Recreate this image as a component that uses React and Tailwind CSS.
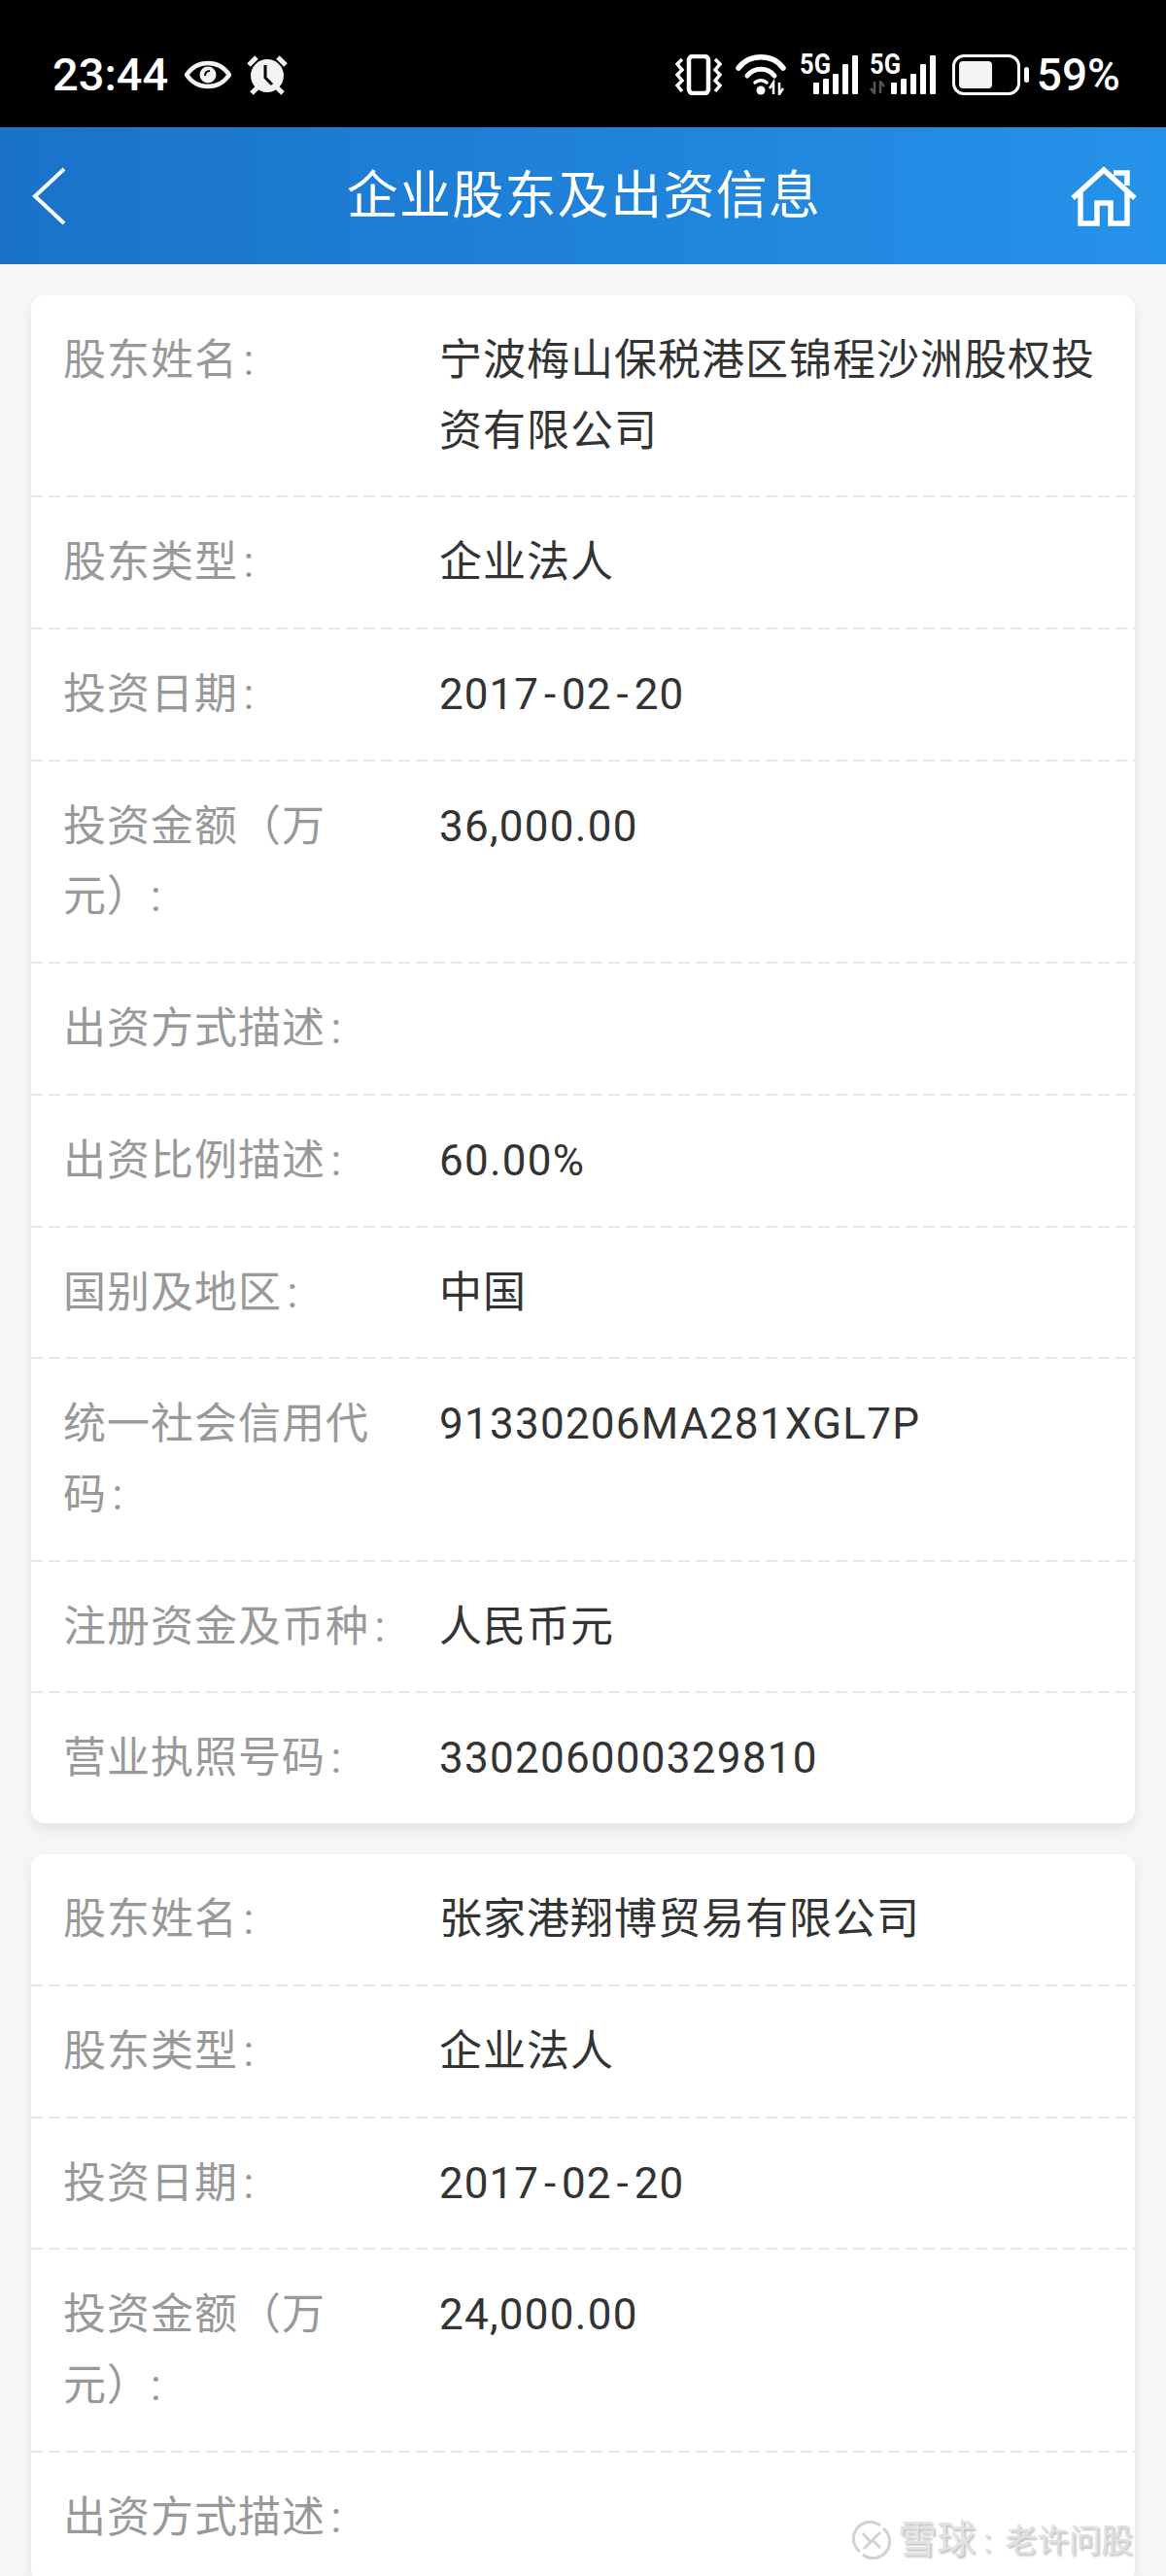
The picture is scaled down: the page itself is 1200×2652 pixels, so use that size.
import React from 'react';

const font = { fontFamily: '"Roboto", "Noto Sans CJK SC", sans-serif' };

const first = [
    ['股东姓名\u200A:', '宁波梅山保税港区锦程沙洲股权投资有限公司'],
    ['股东类型\u200A:', '企业法人'],
    ['投资日期\u200A:', '2017-02-20'],
    ['投资金额（万元）:', '36,000.00'],
    ['出资方式描述\u200A:', ''],
    ['出资比例描述\u200A:', '60.00%'],
    ['国别及地区\u200A:', '中国'],
    ['统一社会信用代码\u200A:', '91330206MA281XGL7P'],
    ['注册资金及币种\u200A:', '人民币元'],
    ['营业执照号码\u200A:', '330206000329810'],
];

const second = [
    ['股东姓名\u200A:', '张家港翔博贸易有限公司'],
    ['股东类型\u200A:', '企业法人'],
    ['投资日期\u200A:', '2017-02-20'],
    ['投资金额（万元）:', '24,000.00'],
    ['出资方式描述\u200A:', ''],
];

function Signal({ dim, className }) {
    return (
        <div className={`relative h-[40px] ${className}`}>
            <span className="absolute left-0 top-[-6px] origin-left scale-x-[0.85] text-[30px] font-bold leading-[30px]">5G</span>
            {dim && (
                <svg className="absolute left-0 bottom-0" width="16" height="14" viewBox="0 0 16 14" fill="none" stroke="#555" strokeWidth="2.5">
                    <path d="M5 1 V13 L1 8 M11 13 V1 L15 6" />
                </svg>
            )}
            <div className="absolute right-0 bottom-0 flex items-end gap-[4px]">
                <div className="h-[12px] w-[6px] rounded-[1px] bg-white" />
                <div className="h-[16px] w-[6px] rounded-[1px] bg-white" />
                <div className="h-[21px] w-[6px] rounded-[1px] bg-white" />
                <div className="h-[31px] w-[6px] rounded-[1px] bg-white" />
                <div className="h-[40px] w-[6px] rounded-[1px] bg-white" />
            </div>
        </div>
    );
}

function StatusIcons() {
    return (
        <div className="flex items-center text-white">
            <svg width="48" height="42" viewBox="0 0 48 42" fill="none" stroke="currentColor">
                <rect x="14" y="2" width="20" height="38" rx="4" strokeWidth="4.5" />
                <path d="M7 5 L2 10 L7 16 L2 21 L7 27 L2 32 L7 38" strokeWidth="3.5" />
                <path d="M41 5 L46 10 L41 16 L46 21 L41 27 L46 32 L41 38" strokeWidth="3.5" />
            </svg>
            <svg className="ml-[14px]" width="54" height="42" viewBox="0 0 54 42" fill="none" stroke="currentColor">
                <path d="M3 14 C14 -1 38 -1 49 14" strokeWidth="5.5" strokeLinecap="round" />
                <path d="M12 22 C19 13 33 13 40 22" strokeWidth="5" strokeLinecap="round" />
                <path d="M20 29 C23 26 29 26 32 29" strokeWidth="3.5" strokeLinecap="round" />
                <circle cx="26" cy="37" r="4.5" fill="currentColor" stroke="none" />
                <path d="M39 41 V29 L35 35 M45 29 V41 L49 35" strokeWidth="2.5" />
            </svg>
            <Signal className="ml-[12px] w-[60px]" />
            <Signal dim className="ml-[12px] w-[68px]" />
            <div className="ml-[17px] flex h-[42px] w-[70px] items-center rounded-[12px] border-[3px] border-white p-[4px]">
                <div className="h-full w-[34px] rounded-[4px] bg-[#f5f2f3]" />
            </div>
            <div className="ml-[4px] h-[16px] w-[5px] rounded-full bg-white" />
            <span className="ml-[8px] text-[46px] font-medium leading-none">59%</span>
        </div>
    );
}

function Header() {
    return (
        <div className="flex h-[141px] items-center bg-gradient-to-r from-[#1a72c9] to-[#2592ea] pl-[32px] pr-[30px] text-white">
            <div className="w-[68px]">
                <svg width="36" height="60" viewBox="0 0 36 60" fill="none" stroke="white" strokeWidth="4">
                    <path d="M34 2 L4 30 L34 58" />
                </svg>
            </div>
            <div className="flex-1 pt-[2px] text-center text-[53px] leading-none tracking-[1.3px]">企业股东及出资信息</div>
            <div className="flex w-[68px] justify-end">
                <svg width="68" height="62" viewBox="0 0 68 62" fill="none" stroke="white" strokeWidth="5.5">
                    <path d="M2 33 L34 4 L66 33" />
                    <path d="M10 27 V59 H27 V38 H41 V59 H58 V27" />
                    <path d="M44 7 H58 V20" />
                </svg>
            </div>
        </div>
    );
}

function Value({ text }) {
    if (/^\d{4}-\d{2}-\d{2}$/.test(text)) {
        const parts = text.split('-');
        return (
            <>
                {parts[0]}<span className="mx-[5px]">-</span>{parts[1]}<span className="mx-[5px]">-</span>{parts[2]}
            </>
        );
    }
    if (/^[\d,.%A-Z]+$/.test(text)) {
        return <span className="tracking-[1.25px]">{text}</span>;
    }
    return text;
}

function Row({ label, value, index }) {
    return (
        <>
            {index > 0 && (
                <div className="h-[2px] bg-[repeating-linear-gradient(90deg,#e6e6e6_0_12px,transparent_12px_18px)]" />
            )}
            <div className="flex pt-[31px] pb-[30.25px] pl-[33px] pr-[30px]">
                <div className="w-[334px] shrink-0 text-[#999999]">{label}</div>
                <div className="ml-[53px] min-h-[72.5px] flex-1 text-[#333333]">
                    <Value text={value} />
                </div>
            </div>
        </>
    );
}

function Card({ rows }) {
    return (
        <div className="rounded-[14px] bg-white text-[44px] leading-[72.5px] tracking-[1px] shadow-[0_6px_12px_rgba(0,0,0,0.08)]">
            {rows.map(([label, value], i) => (
                <Row key={i} index={i} label={label} value={value} />
            ))}
        </div>
    );
}

export default function App() {
    return (
        <div className="relative h-[2652px] w-[1200px] overflow-hidden bg-[#f5f6f7]" style={font}>
            <div className="flex h-[131px] items-center justify-between bg-black pt-[22px] pl-[54px] pr-[47px] text-white">
                <div className="flex items-center">
                    <span className="text-[47px] font-medium leading-none">23:44</span>
                    <svg className="ml-[17px]" width="48" height="30" viewBox="0 0 48 30" fill="none">
                        <path d="M2 15 C13 -1 35 -1 46 15 C35 31 13 31 2 15 Z" stroke="#f5f2f3" strokeWidth="4.5" />
                        <circle cx="24" cy="15" r="8.5" fill="#f5f2f3" />
                        <path d="M21 16 C21 13 23 11 26 11" stroke="#000" strokeWidth="2" />
                    </svg>
                    <svg className="ml-[15px]" width="44" height="42" viewBox="0 0 44 42">
                        <circle cx="22" cy="22" r="17" fill="#f5f2f3" />
                        <path d="M3 11 L11 3 M41 11 L33 3" stroke="#f5f2f3" strokeWidth="5" />
                        <path d="M6 40 L12 34 M38 40 L32 34" stroke="#f5f2f3" strokeWidth="5" />
                        <path d="M20 11 V24 L27 31" stroke="#000" strokeWidth="3" fill="none" />
                    </svg>
                </div>
                <StatusIcons />
            </div>
            <Header />
            <div className="flex flex-col gap-[32px] px-[32px] pt-[32px]">
                <Card rows={first} />
                <Card rows={second} />
            </div>
            <div className="absolute right-[34px] bottom-[16px] flex items-center leading-none [text-shadow:2px_2px_2px_rgba(0,0,0,0.25)]">
                <svg width="42" height="42" viewBox="0 0 42 42" fill="none" stroke="#d2d2d2" strokeWidth="3">
                    <path d="M9 33 A17 17 0 0 1 30 6" />
                    <path d="M33 9 A17 17 0 0 1 12 36" />
                    <path d="M12 14 L20 23 L13 30 M30 13 L22 21 L30 29" />
                </svg>
                <span className="ml-[6px] text-[40px] text-[#e2e2e2]">雪球</span>
                <span className="ml-[8px] text-[33px] text-[#e6e6e6]">:</span>
                <span className="ml-[14px] text-[33px] text-[#e0e0e0]">老许问股</span>
            </div>
        </div>
    );
}
